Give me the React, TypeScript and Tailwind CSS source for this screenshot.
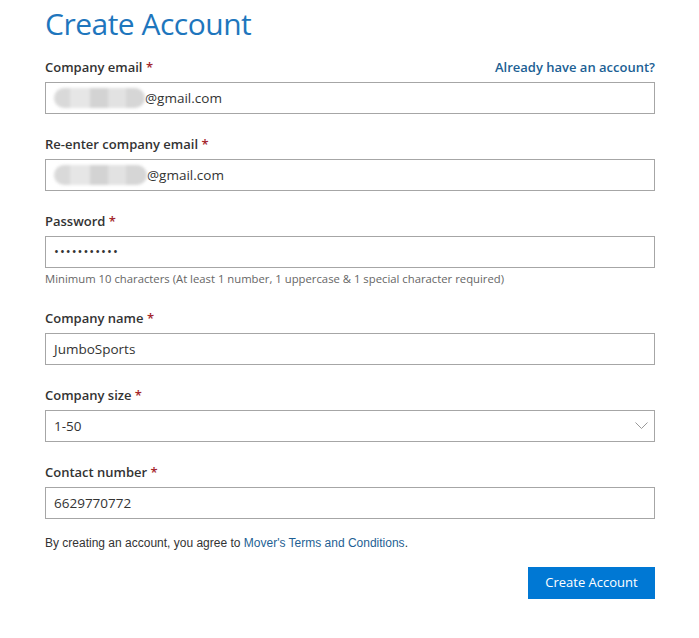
import { ReactNode } from "react";

const font = { fontFamily: '"Open Sans", "Noto Sans", sans-serif' };

function Label({ children, right }: { children: ReactNode; right?: ReactNode }) {
  return (
    <div className="flex items-center justify-between h-5 pt-px mb-[5px]">
      <span className="text-[13px] font-semibold text-[#333]">
        {children} <span className="text-[#a4262c]">*</span>
      </span>
      {right}
    </div>
  );
}

function Box({ children }: { children: ReactNode }) {
  return (
    <div className="h-8 border border-[#a6a6a6] bg-white flex items-center pl-2 pr-[6px] text-[13.5px] text-[#333]">
      {children}
    </div>
  );
}

function Blurred({ width }: { width: number }) {
  return (
    <span className="flex h-5 overflow-hidden rounded-full blur-[1.5px]" style={{ width }}>
      <span className="w-[16px] bg-[#d9d9d9]" />
      <span className="w-[20px] bg-[#e6e6e6]" />
      <span className="w-[18px] bg-[#d3d3d3]" />
      <span className="w-[18px] bg-[#e2e2e2]" />
      <span className="flex-1 bg-[#d6d6d6]" />
    </span>
  );
}

export default function App() {
  return (
    <div className="w-[699px] h-[638px] bg-white" style={font}>
      <div className="ml-[45px] w-[610px] pt-1">
        <h1 className="text-[30px] leading-[40px] tracking-[-0.5px] text-[#1e76bd] mb-[13px]">
          Create Account
        </h1>

        <div className="flex flex-col gap-5">
          <div>
            <Label
              right={
                <a className="text-[13px] font-semibold text-[#205f94]">Already have an account?</a>
              }
            >
              Company email
            </Label>
            <Box>
              <Blurred width={91} />
              <span>@gmail.com</span>
            </Box>
          </div>

          <div>
            <Label>Re-enter company email</Label>
            <Box>
              <Blurred width={93} />
              <span>@gmail.com</span>
            </Box>
          </div>

          <div>
            <Label>Password</Label>
            <Box>
              <span className="tracking-[1px] text-[#333] text-[13px]">•••••••••••</span>
            </Box>
            <p className="mt-[3px] mb-px text-[11.3px] leading-4 text-[#666]">
              Minimum 10 characters (At least 1 number, 1 uppercase &amp; 1 special character required)
            </p>
          </div>

          <div>
            <Label>Company name</Label>
            <Box>JumboSports</Box>
          </div>

          <div>
            <Label>Company size</Label>
            <Box>
              <span className="flex-1">1-50</span>
              <svg width="13" height="8" viewBox="0 0 13 8" fill="none">
                <path d="M0.5 0.5 L6.5 6.5 L12.5 0.5" stroke="#999" strokeWidth="1" />
              </svg>
            </Box>
          </div>

          <div>
            <Label>Contact number</Label>
            <Box>6629770772</Box>
          </div>
        </div>

        <p
          className="mt-[15px] text-[12px] leading-[18px] text-[#333]"
          style={{ fontFamily: '"Liberation Sans", Arial, sans-serif' }}
        >
          By creating an account, you agree to{" "}
          <a className="text-[#1e5f94]">Mover's Terms and Conditions</a>.
        </p>

        <div className="flex justify-end mt-[15px]">
          <button className="h-8 w-[127px] bg-[#0078d4] text-white text-[13px]">Create Account</button>
        </div>
      </div>
    </div>
  );
}
